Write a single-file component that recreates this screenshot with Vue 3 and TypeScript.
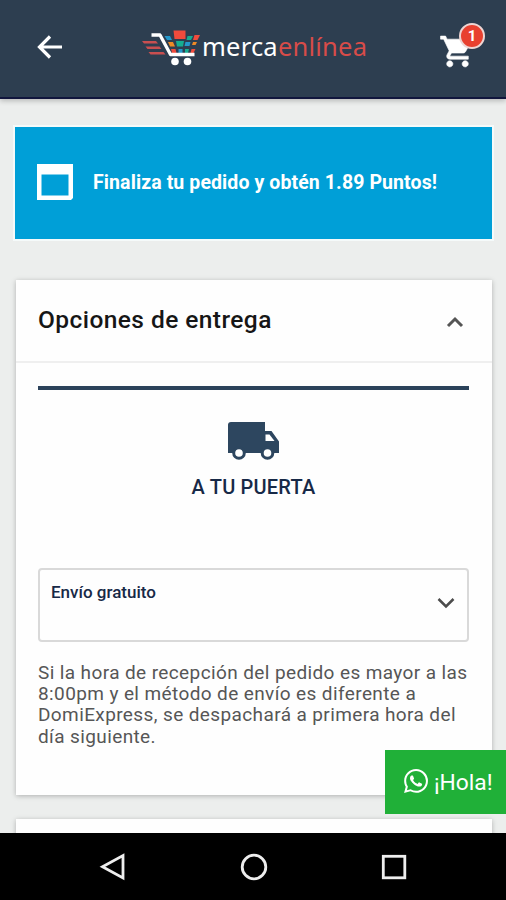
<script setup lang="ts">
import { ref } from 'vue'

const cartCount = ref(1)
const points = ref('1.89')
const open = ref(true)
</script>

<template>
  <div class="screen">
    <header class="topbar">
      <button class="plain back" aria-label="Volver">
        <svg width="26" height="26" viewBox="0 0 26 26"><path d="M25 13H3M13 2.5 2.5 13 13 23.5" fill="none" stroke="#fff" stroke-width="3.2" /></svg>
      </button>
      <div class="brand">
        <svg class="logo" width="60" height="38" viewBox="0 0 60 38">
          <g fill="#c94f50">
            <path d="M0 12h14l2 2.500H2zM3.500 17.500h14l2 2.500H5.500zM6.500 23h15l2 2.500H8.500z" />
          </g>
          <g>
            <path fill="#f04b3c" d="M31.500 1.500h12v8.500h-11zM52.500 6h5.500l-2.500 5h-4.500zM29 20h4.500l1 4h-4.500zM49.500 20h4l-2 4h-3z" />
            <path fill="#2498cb" d="M22.500 7h5.500l2 4h-5zM43.500 13h5l-1 4h-5zM36.500 20h4v4h-4z" />
            <path fill="#16ad91" d="M34 12h8l-1 5.500h-6zM45.500 7h5.500l-2 4h-4.500zM43 20h4l-1 4h-3z" />
            <path fill="#ed8a27" d="M26 13h5l2 4.500h-5zM51 13h4l-1.500 3H50z" />
          </g>
          <path d="M9.500 6h8.500L28.500 25.500H52.500" fill="none" stroke="#fff" stroke-width="3.300" stroke-linejoin="round" />
          <circle cx="33" cy="32.500" r="3.800" fill="#fff" /><circle cx="45.500" cy="32.500" r="3.800" fill="#fff" />
        </svg>
        <span class="wordmark">merca<b>enlínea</b></span>
      </div>
      <button class="plain cart" aria-label="Carrito">
        <svg width="37" height="37" viewBox="0 0 24 24" fill="#fff" stroke="#fff" stroke-width=".4"><path d="M7 18c-1.100 0-2 .9-2 2s.9 2 2 2 2-.9 2-2-.9-2-2-2zM1 2v2h2l3.600 7.590-1.350 2.450c-.16.280-.25.610-.25.960 0 1.100.9 2 2 2h12v-2H7.420c-.14 0-.25-.11-.25-.25l.03-.12.900-1.630h7.450c.75 0 1.410-.41 1.750-1.030l3.580-6.490A1 1 0 0 0 20 4H5.210l-.94-2H1zm16 16c-1.100 0-2 .9-2 2s.9 2 2 2 2-.9 2-2-.9-2-2-2z" /></svg>
        <span class="badge">{{ cartCount }}</span>
      </button>
    </header>

    <main class="content">
      <section class="banner">
        <svg width="36" height="36" viewBox="0 0 36 36"><path fill="#fff" fill-rule="evenodd" d="M0 0h36v34l-2 2H0zM4.500 10.500v21h27v-21z" /></svg>
        <p>Finaliza tu pedido y obtén {{ points }} Puntos!</p>
      </section>

      <section class="card">
        <div class="card-head" @click="open = !open">
          <h2>Opciones de entrega</h2>
          <svg width="18" height="12" viewBox="0 0 18 12"><path d="m2 10 7-7 7 7" fill="none" stroke="#555" stroke-width="3" /></svg>
        </div>
        <div v-if="open" class="card-body">
          <div class="method">
            <svg width="54" height="40" viewBox="0 0 54 40">
              <path fill="#2d465f" d="M4 1h34v9h6.500L52 20.500V32H1V4q0-3 3-3z" />
              <path fill="#fff" d="M38.500 13.500h4l5 6.500h-9z" />
              <g fill="#fff" stroke="#2d465f" stroke-width="3"><circle cx="12" cy="32" r="5.300" /><circle cx="40.500" cy="32" r="5.300" /></g>
            </svg>
            <span>A TU PUERTA</span>
          </div>
          <div class="select">
            <span>Envío gratuito</span>
            <svg width="18" height="12" viewBox="0 0 18 12"><path d="m1.500 2 7.500 7.500L16.500 2" fill="none" stroke="#4c4c4c" stroke-width="2.500" /></svg>
          </div>
          <p class="note">
            Si la hora de recepción del pedido es mayor a las<br>
            8:00pm y el método de envío es diferente a<br>
            DomiExpress, se despachará a primera hora del<br>
            día siguiente.
          </p>
        </div>
      </section>
      <section class="card next"></section>
    </main>

    <button class="plain chat">
      <svg width="24" height="24" viewBox="0 0 24 24" fill="#fff"><path d="M17.472 14.382c-.297-.149-1.758-.867-2.030-.967-.273-.099-.471-.148-.670.150-.197.297-.767.966-.940 1.164-.173.199-.347.223-.644.075-.297-.150-1.255-.463-2.390-1.475-.883-.788-1.480-1.761-1.653-2.059-.173-.297-.018-.458.130-.606.134-.133.298-.347.446-.520.149-.174.198-.298.298-.497.099-.198.050-.371-.025-.520-.075-.149-.669-1.612-.916-2.207-.242-.579-.487-.500-.669-.510-.173-.008-.371-.010-.570-.010-.198 0-.520.074-.792.372-.272.297-1.040 1.016-1.040 2.479 0 1.462 1.065 2.875 1.213 3.074.149.198 2.096 3.200 5.077 4.487.709.306 1.262.489 1.694.625.712.227 1.360.195 1.871.118.571-.085 1.758-.719 2.006-1.413.248-.694.248-1.289.173-1.413-.074-.124-.272-.198-.570-.347m-5.421 7.403h-.004a9.870 9.870 0 0 1-5.031-1.378l-.361-.214-3.741.982.998-3.648-.235-.374a9.860 9.860 0 0 1-1.510-5.260c.001-5.450 4.436-9.884 9.888-9.884 2.640 0 5.122 1.030 6.988 2.898a9.825 9.825 0 0 1 2.893 6.994c-.003 5.450-4.437 9.884-9.885 9.884m8.413-18.297A11.815 11.815 0 0 0 12.050 0C5.495 0 .160 5.335.157 11.892c0 2.096.547 4.142 1.588 5.945L.057 24l6.305-1.654a11.882 11.882 0 0 0 5.683 1.448h.005c6.554 0 11.890-5.335 11.893-11.893a11.821 11.821 0 0 0-3.480-8.413z" /></svg>
      <span>¡Hola!</span>
    </button>

    <nav class="navbar">
      <svg width="28" height="30" viewBox="0 0 28 30"><path d="M24 3.500v22.500L3.500 14.800z" /></svg>
      <svg width="28" height="30" viewBox="0 0 28 30"><circle cx="14" cy="15" r="11.800" /></svg>
      <svg width="28" height="30" viewBox="0 0 28 30"><rect x="3.300" y="4.300" width="21.500" height="21.500" /></svg>
    </nav>
  </div>
</template>

<style>
body { margin: 0; }
</style>
<style scoped>
* { box-sizing: border-box; }
.screen {
  position: relative;
  width: 506px;
  height: 900px;
  display: flex;
  flex-direction: column;
  overflow: hidden;
  background: #eceeed;
  font-family: Roboto, sans-serif;
}
.plain { border: 0; padding: 0; background: none; font: inherit; color: inherit; }
.topbar {
  flex: none;
  height: 99px;
  padding: 0 30px 3px 37px;
  display: flex;
  align-items: center;
  background: #2d3e50;
  border-bottom: 2px solid #11163d;
  box-shadow: 0 2px 5px rgba(0, 0, 0, .22);
}
.back { height: 26px; width: 26px; }
.back svg, .cart svg { display: block; }
.brand { margin-left: 79px; display: flex; align-items: center; }
.logo { margin-top: 2px; }
.wordmark {
  margin: -3px 0 0;
  font: 400 25.500px/32px "Noto Sans", sans-serif;
  letter-spacing: .22px;
  color: #fff;
  white-space: nowrap;
}
.wordmark b { font-weight: 400; color: #d84c49; }
.cart { position: relative; margin-left: auto; width: 37px; height: 37px; margin-top: 8px; }
.badge {
  position: absolute;
  left: 20px;
  top: -10px;
  width: 26px;
  height: 26px;
  border: 2px solid #eed5d3;
  border-radius: 50%;
  background: #e8402f;
  color: #fff;
  font-size: 15px;
  font-weight: 700;
  line-height: 22px;
  text-align: center;
}
.content { flex: 1; min-height: 0; overflow: hidden; padding: 28px 14px 0 15px; }
.banner {
  height: 112px;
  padding: 0 22px;
  display: flex;
  align-items: center;
  background: #009fd7;
  box-shadow: 0 0 0 2px #f5fafa;
}
.banner svg { margin-top: -2px; }
.banner p { margin: -2px 0 0 20px; color: #fff; font-size: 19.500px; font-weight: 700; letter-spacing: .1px; white-space: nowrap; }
.card {
  margin: 41px 0 0 1px;
  height: 515px;
  background: #fefefe;
  box-shadow: 0 1px 5px rgba(0, 0, 0, .26);
}
.card.next { margin-top: 24px; height: 90px; }
.card-head {
  height: 83px;
  padding: 0 28px 3px 22px;
  display: flex;
  align-items: center;
  justify-content: space-between;
  border-bottom: 2px solid #efefef;
}
.card-head h2 { margin: 0; font-size: 24.500px; font-weight: 500; letter-spacing: .43px; color: #161616; }
.card-head svg { margin-top: 5px; }
.card-body { padding: 23px 23px 0 22px; }
.method {
  height: 182px;
  border-top: 4px solid #2b425a;
  display: flex;
  flex-direction: column;
  align-items: center;
  padding-top: 31px;
}
.method span { margin-top: 14px; font-size: 20px; line-height: 24px; font-weight: 500; letter-spacing: .2px; color: #172947; }
.select {
  height: 74px;
  padding: 12px 13px 0 12px;
  border: 2px solid #d9d9d9;
  border-radius: 4px;
  display: flex;
  justify-content: space-between;
}
.select span { font-size: 17px; line-height: 20px; font-weight: 500; color: #172947; margin-left: -1px; }
.select svg { margin-top: 15px; margin-right: -1px; }
.note { margin: 20px 0 0; font-size: 19px; line-height: 21.200px; letter-spacing: .39px; color: #565656; white-space: nowrap; }
.chat {
  position: absolute;
  right: 0;
  top: 750px;
  width: 121px;
  height: 64px;
  padding-left: 19px;
  display: flex;
  align-items: center;
  gap: 6px;
  background: #20b038;
  color: #fff;
  font-size: 22.800px;
}
.chat svg { margin-top: -2px; }
.chat span { padding-top: 1px; }
.navbar {
  flex: none;
  height: 67px;
  display: flex;
  align-items: center;
  padding: 0 98px 0 99px;
  justify-content: space-between;
  background: #000;
}
.navbar svg { fill: none; stroke: #eee; stroke-width: 2.800; }
</style>
